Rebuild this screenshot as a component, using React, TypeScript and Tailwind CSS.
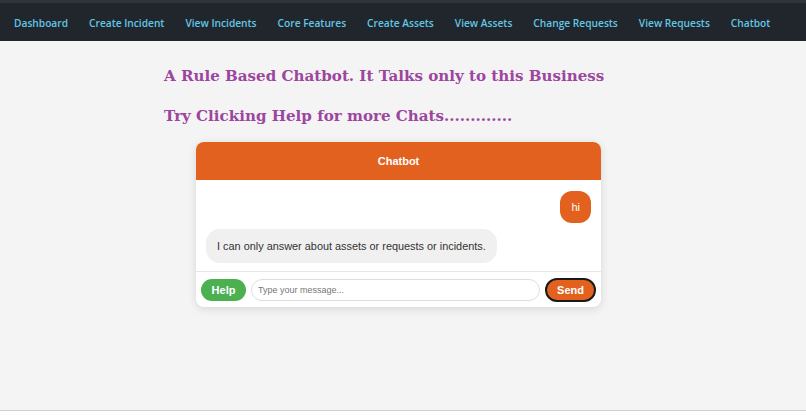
import { useState } from "react";

const links = [
  "Dashboard",
  "Create Incident",
  "View Incidents",
  "Core Features",
  "Create Assets",
  "View Assets",
  "Change Requests",
  "View Requests",
  "Chatbot",
];

type Message = { from: "user" | "bot"; text: string };

export default function App() {
  const [messages] = useState<Message[]>([
    { from: "user", text: "hi" },
    { from: "bot", text: "I can only answer about assets or requests or incidents." },
  ]);
  const [draft, setDraft] = useState("");

  return (
    <div className="min-h-[411px] border-b border-[#d0d0d0] bg-[#f4f4f4]">
      <nav className="h-[41px] border-t-[3px] border-[#30353a] bg-[#21262c]">
        <ul className="flex h-full items-center gap-[21px] whitespace-nowrap pl-[14px] pt-[3px] font-['Open_Sans',sans-serif] text-[10.2px] font-semibold text-[#62c6e6]">
          {links.map((label) => (
            <li key={label}>
              <a href="#">{label}</a>
            </li>
          ))}
        </ul>
      </nav>

      <div className="pl-[164px] pt-[24px] font-['DejaVu_Serif',serif] text-[15.1px] font-bold text-[#9c469f]">
        <h1>A Rule Based Chatbot. It Talks only to this Business</h1>
        <h2 className="mt-[17px]">Try Clicking Help for more Chats.............</h2>
      </div>

      <div className="ml-[196px] mt-[15px] w-[405px] overflow-hidden rounded-lg bg-white font-['Liberation_Sans',sans-serif] shadow-[0_2px_8px_rgba(0,0,0,0.12)]">
        <div className="flex h-[38px] items-center justify-center bg-[#e2611f] text-[11px] font-bold text-white">
          Chatbot
        </div>
        <div className="flex h-[92px] flex-col gap-[6px] border-b border-[#e6e6e6] px-[10px] pt-[11px]">
          {messages.map((m, i) =>
            m.from === "user" ? (
              <div key={i} className="self-end rounded-xl bg-[#e2611f] px-[11px] py-[9px] text-[11px] leading-[14px] text-white">
                {m.text}
              </div>
            ) : (
              <div key={i} className="self-start rounded-[14px] bg-[#f0f0f0] px-[11px] py-[10px] text-[10.9px] leading-[14px] text-[#333]">
                {m.text}
              </div>
            ),
          )}
        </div>
        <div className="flex h-[35px] items-center gap-[5px] px-[5px]">
          <button className="h-[22px] w-[45px] rounded-full bg-[#4caf50] text-[11px] font-bold text-white">Help</button>
          <input
            value={draft}
            onChange={(e) => setDraft(e.target.value)}
            placeholder="Type your message..."
            className="h-[22px] flex-1 rounded-full border border-[#dedede] px-[6px] text-[9px] text-[#333] outline-none placeholder:text-[#777]"
          />
          <button className="h-[24px] w-[51px] rounded-full border-2 border-[#1a1a1a] bg-[#e2611f] text-[11px] font-bold text-white">
            Send
          </button>
        </div>
      </div>
    </div>
  );
}
